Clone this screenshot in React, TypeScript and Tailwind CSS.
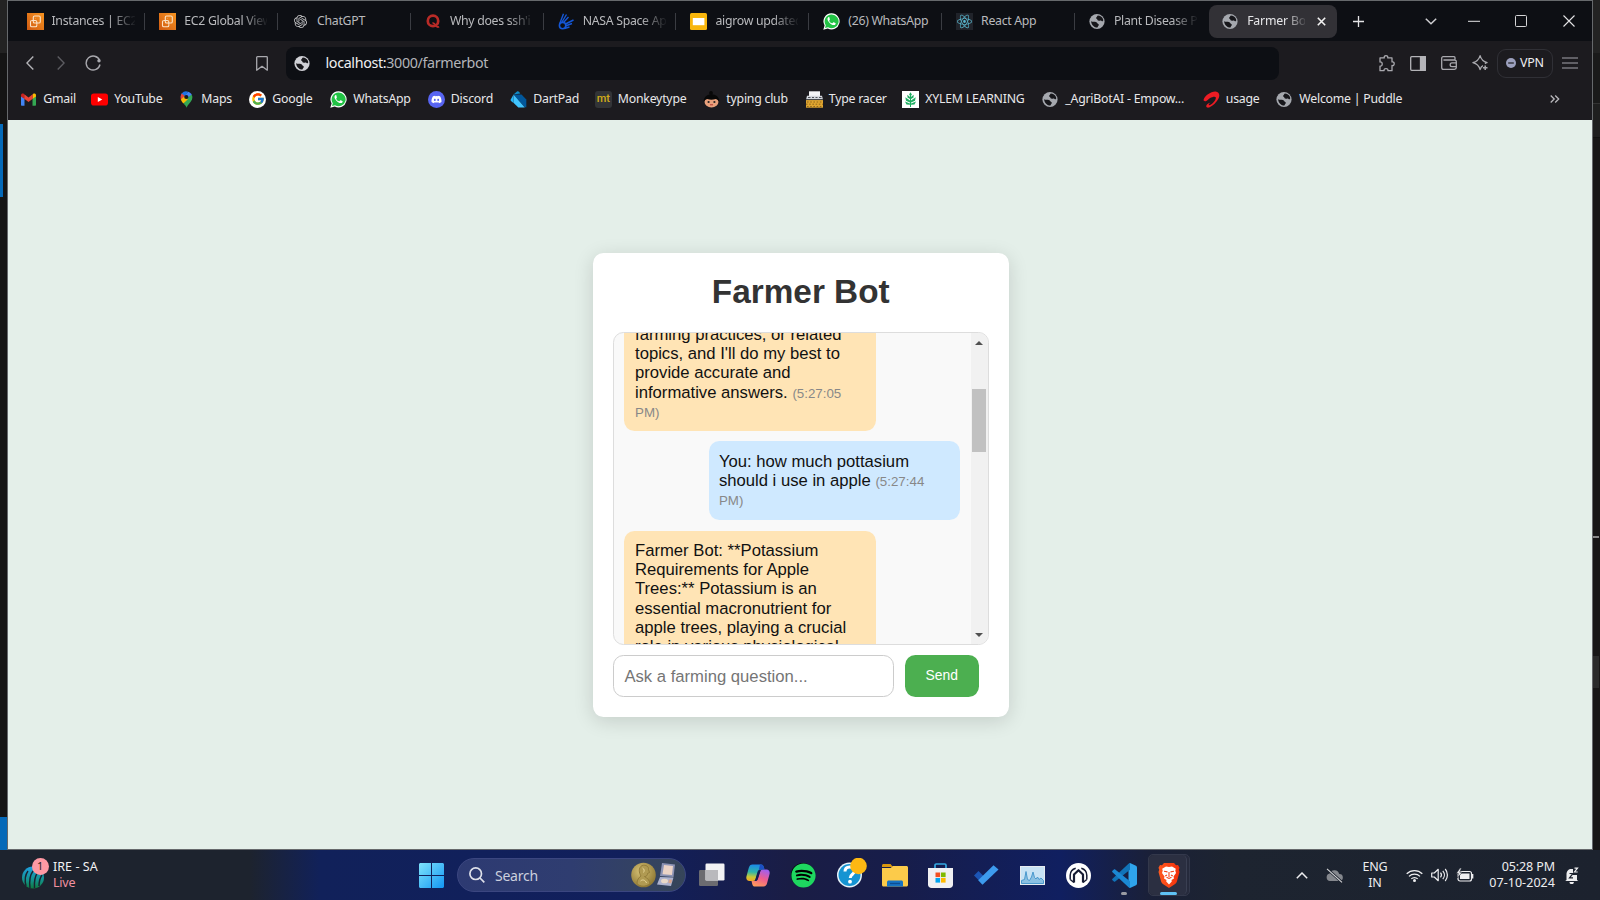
import type { ReactNode } from "react";
import { FaDiscord, FaSpotify } from "react-icons/fa";
import { FcGoogle } from "react-icons/fc";
import { SiOpenai, SiReact } from "react-icons/si";

/* ---------- Favicons ---------- */

const Globe = ({ bright = false }: { bright?: boolean }) => (
  <svg viewBox="0 0 17 17" className={"size-[17px] shrink-0 " + (bright ? "text-[#d0d1d6]" : "text-[#a5a8ae]")}>
    <circle cx="8" cy="8.500" r="7.600" fill="currentColor" />
    <path d="M8.800 2.500c2.400.1 4.300 1.300 5.200 3.500.3 1 .4 1.900-.4 2.300-.7.300-1-.6-1.700-.8-1-.3-1.800.5-2.800.1-.9-.4-.5-1.400-1.400-1.800-.8-.5-.9-1.100-.2-1.600.8-.5.5-1.200 1.300-1.700Z" fill="#17171b" />
    <path d="M2.100 8.300c1.500.8 3.300.3 4.900.7 1.300.400 1.100 1.500 2.200 1.900.9.400.9 1.300.2 1.800-.7.500-.5 1.300-1.200 1.900-1.300-.1-2.700-.6-3.800-1.600C2.900 11.800 2.200 10.200 2.100 8.300Z" fill="#17171b" />
  </svg>
);

const Ec2 = () => (
  <svg viewBox="0 0 17 17" className="size-[17px] shrink-0">
    <defs>
      <linearGradient id="ec2" x1="0" y1="1" x2="1" y2="0">
        <stop offset="0" stopColor="#cf5a12" />
        <stop offset="1" stopColor="#f79420" />
      </linearGradient>
    </defs>
    <rect width="17" height="17" fill="url(#ec2)" />
    <g fill="none" stroke="#fbe3c8" strokeWidth="1.1">
      <rect x="6.300" y="3" width="7" height="7" rx="1.300" />
      <path d="M4.800 7.500c-.8 0-1.300.500-1.300 1.300v3.700c0 .8.500 1.300 1.300 1.300h3.700c.8 0 1.300-.5 1.300-1.300v-1" />
      <path d="M8.500 5.800v-.3M4.800 7.500h3.500c.8 0 1.500.700 1.500 1.500v2.500" />
    </g>
  </svg>
);

const WhatsApp = () => (
  <svg viewBox="0 0 17 17" className="size-[17px] shrink-0">
    <path d="M8.600.3a8 8 0 0 0-7 12.1L.3 16.8l4.500-1.200A8.100 8.100 0 1 0 8.600.3Z" fill="#fff" />
    <path d="M8.600 1.500a6.900 6.900 0 0 0-5.800 10.700L2 15l3-.8A6.900 6.900 0 1 0 8.600 1.500Z" fill="#22c345" />
    <path
      d="M6.400 4.500c-.3-.5-.7-.5-1.100-.2-1 .9-1 2.200-.3 3.500 1 1.900 2.500 3.300 4.600 4.100 1.300.5 2.500.1 3-1 .2-.6.100-.8-.3-1l-1.500-.7c-.3-.1-.5 0-.7.2l-.6.8c-.2.200-.4.200-.6.100-1.200-.5-2.100-1.300-2.700-2.400-.1-.2 0-.4.100-.5l.5-.6c.1-.2.1-.4 0-.6Z"
      fill="#fff"
    />
  </svg>
);

const Quora = () => (
  <svg viewBox="0 0 17 17" className="size-[17px] shrink-0">
    <circle cx="8" cy="7.900" r="5.200" fill="none" stroke="#b92b27" strokeWidth="2.700" />
    <path d="M7.500 10.200c2-.6 2.700 1.200 3.600 2.700.7 1.200 2 1.400 2.900.6" fill="none" stroke="#b92b27" strokeWidth="1.800" />
  </svg>
);

const Nasa = () => (
  <svg viewBox="0 0 17 17" className="size-[17px] shrink-0" fill="none" stroke="#1557d6">
    <circle cx="4.600" cy="12.600" r="3.200" strokeWidth="1.600" />
    <path d="M1.600 11 5.500.8M4 9 8.500 1.500M5.500 9.500l5-5.500M7.500 11l8-4M7.500 13l6.500-2.500M6.500 15.500l5-1.500" strokeWidth="1.400" />
  </svg>
);

const Slides = () => (
  <svg viewBox="0 0 17 17" className="size-[17px] shrink-0">
    <rect width="17" height="17" rx="1.500" fill="#f8b60c" />
    <rect x="2.800" y="5" width="11.600" height="7.200" fill="#fff" />
  </svg>
);

const Gmail = () => (
  <svg viewBox="0 0 17 17" className="size-[17px] shrink-0">
    <path d="M1 5v8.700c0 .6.400 1 1 1h2.500V7.500Z" fill="#4285f4" />
    <path d="M16 5v8.700c0 .6-.4 1-1 1h-2.500V7.500Z" fill="#34a853" />
    <path d="M12.500 4v4L16 5.400V4.200c0-1.600-1.700-2.200-2.800-1.400Z" fill="#fbbc04" />
    <path d="M4.500 4v4L1 5.400V4.200c0-1.600 1.700-2.200 2.800-1.400Z" fill="#c5221f" />
    <path d="M4.300 3.200 8.500 6.400l4.200-3.200v4.600L8.500 11 4.300 7.800Z" fill="#ea4335" />
  </svg>
);

const YouTube = () => (
  <svg viewBox="0 0 17 17" className="size-[17px] shrink-0">
    <rect x="0" y="2.500" width="17" height="12" rx="2.800" fill="#f00" />
    <path d="M6.800 5.900v5.200l4.500-2.600Z" fill="#fff" />
  </svg>
);

const Maps = () => (
  <svg viewBox="0 0 17 17" className="size-[17px] shrink-0">
    <path d="M3.700 2.600A5.700 5.700 0 0 1 10.200.7L4.600 8.200 2.800 6.600c-.1-1.500.2-2.900.9-4Z" fill="#1a73e8" />
    <path d="M3.700 2.600 6.700 5 2.900 9c-.6-2-.4-4.600.8-6.400Z" fill="#ea4335" />
    <path d="M10.200.7c1.600.5 2.900 1.700 3.600 3.100L9.900 8.200 6.800 4.700Z" fill="#4285f4" />
    <path d="M13.800 3.800c1 2 .7 4.200-.6 6.100l-4.700 4L4 9.900Z" fill="#34a853" />
    <path d="M2.900 8.500 6.700 5l3.200 3.300-4.600 4.200c-1-1.300-2.100-2.600-2.400-4Z" fill="#fbbc04" />
    <path d="m5.300 12.500 7.900-2.600C11.500 12.300 9.700 13.700 8.600 16.700c-.5-1.700-1.700-2.900-3.300-4.200Z" fill="#34a853" />
    <circle cx="8.300" cy="6" r="2.100" fill="#1c1b1f" />
  </svg>
);

const Google = () => (
  <span className="flex size-[17px] shrink-0 items-center justify-center rounded-full bg-white">
    <FcGoogle className="size-[14px]" />
  </span>
);

const Discord = () => (
  <span className="flex size-[17px] shrink-0 items-center justify-center rounded-full bg-[#5865f2]">
    <FaDiscord className="size-[11px] text-white" />
  </span>
);

const Dart = () => (
  <svg viewBox="0 0 17 17" className="size-[17px] shrink-0">
    <path d="M3.500 3.500 7 .5c.6-.5 1.500-.3 2 .2l1.300 1.800Z" fill="#0f8cc9" />
    <path d="M3.500 3.500h8l4.800 5v7.800h-1.500Z" fill="#01579b" />
    <path d="M3.500 3.500v8.200l4.800 4.800h6.500Z" fill="#40c4ff" />
    <path d="M3.500 3.500.7 8.500c-.3.600-.1 1.100.3 1.600l2.500 2Z" fill="#29b6f6" />
  </svg>
);

const Monkeytype = () => (
  <span className="flex size-[17px] shrink-0 items-center justify-center rounded-[3px] bg-[#323437] pb-px font-[Roboto,sans-serif] text-[11px] leading-none font-medium text-[#d3ac18]">
    mt
  </span>
);

const TypingClub = () => (
  <svg viewBox="0 0 17 17" className="size-[17px] shrink-0">
    <circle cx="8" cy="1.900" r="1.900" fill="#080808" />
    <ellipse cx="8.500" cy="10.800" rx="7" ry="5.600" fill="#e9a17c" />
    <path d="M.8 11C.4 6 4 3.200 8.500 3.200S16.600 6 16.200 11c-1-1.500-2-2.600-3.300-3-3 .9-6 .9-8.800 0C2.800 8.400 1.600 9.500.8 11Z" fill="#080808" />
    <circle cx="5.600" cy="11" r="1.100" fill="#222" />
    <circle cx="11.400" cy="11" r="1.100" fill="#222" />
    <path d="M7 13.800h3" stroke="#b1372f" strokeWidth="1" />
  </svg>
);

const TypeRacer = () => (
  <svg viewBox="0 0 17 17" className="size-[17px] shrink-0">
    <path d="M3 .3h11v5.500H3Z" fill="#f4f4f6" />
    <path d="M1 4.800h15l1 4H0Z" fill="#d5d8de" />
    <path d="M2 6.500h2.500M6 6.500h2M9.500 6.500h2M13 6.500h2.500" stroke="#50535a" strokeWidth="1" />
    <rect y="8.500" width="17" height="8.200" fill="#e0a52f" />
    <path d="M1 11h15M0 13.200h17M1 15.500h15" stroke="#84601c" strokeWidth=".9" strokeDasharray="1.600 1.600" />
    <path d="M0 8.600h17" stroke="#3b4149" strokeWidth="1" />
  </svg>
);

const Xylem = () => (
  <svg viewBox="0 0 17 17" className="size-[17px] shrink-0">
    <rect width="17" height="17" fill="#fff" />
    <path d="m8.500 1.200 1.400 2.300-1.400 2-1.400-2ZM8 6 5.300 3.800 5.500 6.500 8 8ZM9 6l2.700-2.200-.2 2.700L9 8ZM8 9.500 3.300 6.300l.7 3.500 4 1.700ZM9 9.500l4.700-3.200-.7 3.500-4 1.700ZM8 12.500l-5-2 1.500 3 3.500.3ZM9 12.500l5-2-1.500 3-3.500.3Z" fill="#1fae62" />
    <path d="M8.500 4v12" stroke="#1fae62" strokeWidth="1" />
  </svg>
);

const Airtel = () => (
  <svg viewBox="0 0 17 17" className="size-[17px] shrink-0">
    <path
      d="M.6 8.800C1.200 5 8 .2 12.500.4c3.600.3 4.800 3.500 3 7.200-1.700 3.600-6 7.800-9.300 8.900-1.800.5-3.300-.2-2.900-1.700.5-1.800 2.600-3 4-3.100-.9.700-1.700 1.500-1.500 2.200.3.800 2 0 3.300-1.100 2.500-2.200 4.300-5 3.600-6.500-.7-1.200-3.700-.2-5.600.8C5 8.300 4.300 9.900 2.600 10.200 1.300 10.400.400 9.900.600 8.800Z"
      fill="#ed1c24"
    />
  </svg>
);

/* ---------- Tab strip ---------- */

type TabInfo = { icon: ReactNode; label: string; fade?: boolean };

const tabs: TabInfo[] = [
  { icon: <Ec2 />, label: "Instances | EC2", fade: true },
  { icon: <Ec2 />, label: "EC2 Global View", fade: true },
  { icon: <SiOpenai className="mx-[2px] size-[13px] shrink-0 text-[#c4c4c6]" />, label: "ChatGPT" },
  { icon: <Quora />, label: "Why does ssh'i", fade: true },
  { icon: <Nasa />, label: "NASA Space Ap", fade: true },
  { icon: <Slides />, label: "aigrow updated", fade: true },
  { icon: <WhatsApp />, label: "(26) WhatsApp" },
  {
    icon: (
      <span className="flex size-[17px] shrink-0 items-center justify-center bg-[#20232a]">
        <SiReact className="size-[15px] text-[#58b5cc]" />
      </span>
    ),
    label: "React App",
  },
  { icon: <Globe />, label: "Plant Disease P", fade: true },
];

function Tab({ icon, label, fade }: TabInfo) {
  return (
    <div className="flex h-[17px] w-[132.800px] shrink-0 items-center border-r border-[#3a3c42] pl-[14px] last-of-type:border-transparent">
      {icon}
      <span
        className={
          "ml-2 w-[83px] overflow-hidden text-[12.300px] tracking-[-0.300px] whitespace-nowrap text-[#b9babd] " +
          (fade ? "[mask-image:linear-gradient(to_right,#000_70%,transparent_102%)]" : "")
        }
      >
        {label}
      </span>
    </div>
  );
}

function TabStrip() {
  return (
    <div className="flex h-[40px] shrink-0 items-center bg-[#0d0f14] pl-[4.500px]">
      <div className="flex shrink-0">
        {tabs.map((t) => (
          <Tab key={t.label} {...t} />
        ))}
      </div>
      <div className="ml-[1.500px] flex h-[33px] w-[128px] shrink-0 items-center rounded-[8px] bg-[#323136] pl-[13px]">
        <Globe />
        <span className="ml-2 w-[58px] overflow-hidden text-[12.300px] tracking-[-0.180px] whitespace-nowrap text-[#e6e6e8] [mask-image:linear-gradient(to_right,#000_65%,transparent_105%)]">
          Farmer Bo
        </span>
        <svg viewBox="0 0 9 9" className="ml-[12px] size-[9px]" stroke="#f2f2f2" strokeWidth="1.600">
          <path d="M.8.8l7.400 7.400M8.200.8.8 8.200" />
        </svg>
      </div>
      <svg viewBox="0 0 11 11" className="ml-[16px] size-[11px] shrink-0" stroke="#e4e4e6" strokeWidth="1.300">
        <path d="M5.500 0v11M0 5.500h11" />
      </svg>
      <svg viewBox="0 0 12 7" className="ml-[61px] h-[7px] w-[12px] shrink-0" fill="none" stroke="#cfcfd2" strokeWidth="1.500">
        <path d="m.8.800 5.200 5 5.200-5" />
      </svg>
      <svg viewBox="0 0 12 2" className="ml-[30.500px] h-[2px] w-[12px] shrink-0">
        <path d="M0 1.300h12" stroke="#e4e4e6" strokeWidth="1" />
      </svg>
      <svg viewBox="0 0 12 12" className="ml-[35px] size-[12px] shrink-0" fill="none" stroke="#d4d4d6" strokeWidth="1">
        <rect x=".5" y=".5" width="11" height="11" rx="1" />
      </svg>
      <svg viewBox="0 0 12 12" className="ml-[36px] size-[12px] shrink-0" stroke="#e4e4e6" strokeWidth="1.100">
        <path d="M.5.500l11 11M11.500.500l-11 11" />
      </svg>
    </div>
  );
}

/* ---------- Toolbar ---------- */

function AddressRow() {
  return (
    <div className="flex h-[44px] shrink-0 items-center pl-[18px] [&_svg]:shrink-0">
      <svg viewBox="0 0 8 14" className="h-[14px] w-[8px]" fill="none" stroke="#b4b4b8" strokeWidth="1.400">
        <path d="M7.300.600.900 7l6.400 6.400" />
      </svg>
      <svg viewBox="0 0 8 14" className="ml-[23px] h-[14px] w-[8px]" fill="none" stroke="#5d5d62" strokeWidth="1.400">
        <path d="M.700.600 7.100 7 .700 13.400" />
      </svg>
      <svg viewBox="0 0 17 16" className="ml-[20px] h-[16px] w-[17px]" fill="none" stroke="#a9a9ae" strokeWidth="1.400">
        <path d="M14.600 5.300A7 7 0 1 0 15 9.500" />
        <circle cx="14" cy="5.800" r="1.700" fill="#a9a9ae" stroke="none" />
      </svg>
      <svg viewBox="0 0 12 15" className="ml-[154px] h-[15px] w-[12px]" fill="none" stroke="#a9a9ae" strokeWidth="1.300">
        <path d="M.700 1.500c0-.5.300-.8.800-.8h9c.5 0 .8.300.8.800v12.700L6 10.300.700 14.200Z" strokeLinejoin="round" />
      </svg>
      <div className="ml-[18px] flex h-[33px] w-[993px] shrink-0 items-center rounded-[8px] bg-[#0d0f14] pl-[8px]">
        <Globe bright />
        <span className="ml-[14.500px] text-[14.300px] tracking-[-0.350px] text-[#b3b4b9]">
          <span className="text-[#f0f0f2]">localhost:</span>3000/farmerbot
        </span>
      </div>
      <svg viewBox="0 0 17 17" className="ml-[99px] size-[17px]" fill="none" stroke="#a9a9ae" strokeWidth="1.300" strokeLinejoin="round">
        <path d="M2 2.900h4.300c-.4-1.500.4-2.200 1.700-2.200s2.100.7 1.700 2.200h4.300v4c1.500-.4 2.200.6 2.200 1.800s-.7 2.200-2.200 1.800v5.200H9.900c.3-1.300-.4-2.100-1.900-2.100s-2.200.8-1.900 2.100H2v-4.600c1.600.2 2.200-.9 2.200-2.200S3.600 6.700 2 7Z" />
      </svg>
      <svg viewBox="0 0 16 15" className="ml-[15px] h-[15px] w-[16px]" fill="none" stroke="#b4b4b8" strokeWidth="1.300">
        <rect x=".7" y=".7" width="14.600" height="13.600" rx="1" />
        <path d="M10.500.700h4.800v13.600h-4.800Z" fill="#b4b4b8" />
      </svg>
      <svg viewBox="0 0 16 14" className="ml-[15px] h-[14px] w-[16px]" fill="none" stroke="#a9a9ae" strokeWidth="1.300">
        <path d="M14 4V1.700c0-.6-.4-1-1-1H2.200C1.300.700.700 1.300.700 2.100v9.300c0 1.100.7 1.900 1.900 1.900h10.800c1 0 1.900-.7 1.900-1.700V5.700c0-1-.7-1.700-1.700-1.700H2.400" />
        <path d="M15.300 6.900H11a1.800 1.800 0 0 0 0 3.700h4.300" />
      </svg>
      <svg viewBox="0 0 16 16" className="ml-[15px] size-[16px]" fill="none" stroke="#a9a9ae" strokeWidth="1.300" strokeLinejoin="round">
        <path d="M11 10.600c-1.600.6-2.200 1.500-2.900 4.100C7.100 10.800 5.500 8.900.9 7.700c4.100-1 6-2.600 7.200-7 1.100 4.100 2.900 5.900 7 7-.9.200-1.600.5-2.200.9" />
        <path d="M13.200 10.500v4.600M10.900 12.800h4.600" strokeWidth="1.500" />
      </svg>
      <div className="ml-[9px] flex h-[29px] w-[56px] shrink-0 items-center rounded-[9px] border border-[#303036] pl-[8px]">
        <svg viewBox="0 0 10 10" className="size-[10px]">
          <circle cx="5" cy="5" r="5" fill="#9ca0bd" />
          <path d="M2.200 5h5.600" stroke="#1c1b1f" strokeWidth="1.200" />
        </svg>
        <span className="ml-[4px] text-[12.500px] tracking-[-0.250px] text-[#ededf0]">VPN</span>
      </div>
      <svg viewBox="0 0 16 12" className="ml-[9px] h-[12px] w-[16px]" stroke="#77777d" strokeWidth="1.300">
        <path d="M0 1h16M0 6h16M0 11h16" />
      </svg>
    </div>
  );
}

const bookmarks: { icon: ReactNode; label: string; width: string }[] = [
  { icon: <Gmail />, label: "Gmail", width: "w-[71px]" },
  { icon: <YouTube />, label: "YouTube", width: "w-[87px]" },
  { icon: <Maps />, label: "Maps", width: "w-[71px]" },
  { icon: <Google />, label: "Google", width: "w-[81px]" },
  { icon: <WhatsApp />, label: "WhatsApp", width: "w-[97.500px]" },
  { icon: <Discord />, label: "Discord", width: "w-[82.500px]" },
  { icon: <Dart />, label: "DartPad", width: "w-[84.500px]" },
  { icon: <Monkeytype />, label: "Monkeytype", width: "w-[108.500px]" },
  { icon: <TypingClub />, label: "typing club", width: "w-[102.500px]" },
  { icon: <TypeRacer />, label: "Type racer", width: "w-[96.500px]" },
  { icon: <Xylem />, label: "XYLEM LEARNING", width: "w-[140px]" },
  { icon: <Globe />, label: "_AgriBotAI - Empow...", width: "w-[160.500px]" },
  { icon: <Airtel />, label: "usage", width: "w-[73.500px]" },
  { icon: <Globe />, label: "Welcome | Puddle", width: "w-[140px]" },
];

function BookmarkBar() {
  return (
    <div className="flex h-[35px] shrink-0 items-start pt-[4px] pl-[12.300px]">
      {bookmarks.map((b) => (
        <div key={b.label} className={"flex h-[20px] shrink-0 items-center gap-[6px] " + b.width}>
          {b.icon}
          <span className="text-[12.300px] tracking-[-0.230px] whitespace-nowrap text-[#e8e8ea]">{b.label}</span>
        </div>
      ))}
      <svg viewBox="0 0 10 8" className="mt-[6px] ml-[134px] h-[8px] w-[10px] shrink-0" fill="none" stroke="#b9b9bd" strokeWidth="1.300">
        <path d="m.700.500 3.500 3.500L.700 7.500M5.200.500 8.700 4 5.200 7.500" />
      </svg>
    </div>
  );
}

/* ---------- Chat page ---------- */

const Time = ({ children }: { children: ReactNode }) => (
  <span className="text-[13.330px] leading-none text-[#888]">{children}</span>
);

function BotMessage({ children }: { children: ReactNode }) {
  return (
    <div className="w-[252px] shrink-0 self-start rounded-[10.400px] bg-[#ffe4b5] py-[10.400px] pl-[11px]">
      {children}
    </div>
  );
}

function UserMessage({ children }: { children: ReactNode }) {
  return (
    <div className="mt-[10px] mb-[11px] w-[251px] shrink-0 self-end rounded-[10.400px] bg-[#cfe9ff] py-[10.400px] pl-[10.400px]">
      {children}
    </div>
  );
}

function ChatCard() {
  return (
    <div className="ml-[1.500px] flex h-[464px] w-[416.500px] flex-col rounded-[10.400px] bg-white px-[20.500px] shadow-[0_4px_20px_rgba(0,0,0,0.14)]">
      <h1 className="mt-[20px] mb-[20.500px] h-[38px] text-center text-[33.330px] leading-[38px] font-bold text-[#333]">
        Farmer Bot
      </h1>
      <div className="flex h-[313px] shrink-0 overflow-hidden rounded-[10.400px] border border-[#ddd] bg-[#f9f9f9]">
        <div className="flex h-full flex-1 flex-col overflow-hidden pr-[11px] pl-[10px] text-[16.670px] leading-[19.200px] text-[#111]">
          <div className="-mt-[18px] flex shrink-0 flex-col">
            <BotMessage>
              farming practices, or related
              <br />
              topics, and I'll do my best to
              <br />
              provide accurate and
              <br />
              informative answers. <Time>(5:27:05</Time>
              <br />
              <Time>PM)</Time>
            </BotMessage>
            <UserMessage>
              You: how much pottasium
              <br />
              should i use in apple <Time>(5:27:44</Time>
              <br />
              <Time>PM)</Time>
            </UserMessage>
            <BotMessage>
              Farmer Bot: **Potassium
              <br />
              Requirements for Apple
              <br />
              Trees:** Potassium is an
              <br />
              essential macronutrient for
              <br />
              apple trees, playing a crucial
              <br />
              role in various physiological
            </BotMessage>
          </div>
        </div>
        <div className="flex w-[17px] shrink-0 flex-col items-center bg-[#f1f1f1]">
          <svg viewBox="0 0 8 4" className="mt-[8px] h-[4px] w-[8px]">
            <path d="M0 4 4 0l4 4Z" fill="#505050" />
          </svg>
          <div className="mt-[44px] h-[63px] w-[14.500px] bg-[#c1c1c1]" />
          <svg viewBox="0 0 8 4" className="mt-auto mb-[7px] h-[4px] w-[8px]">
            <path d="M0 0l4 4 4-4Z" fill="#505050" />
          </svg>
        </div>
      </div>
      <div className="mt-[10.500px] flex">
        <div className="flex h-[42px] w-[281px] items-center rounded-[10.400px] border border-[#ccc] pl-[10.400px] text-[16.670px] text-[#757575]">
          Ask a farming question...
        </div>
        <button className="ml-[11px] h-[42px] w-[73.500px] rounded-[10.400px] bg-[#4caf50] pb-px text-[13.890px] text-white">
          Send
        </button>
      </div>
    </div>
  );
}

/* ---------- Taskbar ---------- */

function StartIcon() {
  return (
    <svg viewBox="0 0 25 25" className="size-[25px]">
      <defs>
        <linearGradient id="win" x1="0" y1="0" x2="1" y2="1">
          <stop offset="0" stopColor="#7fe3fb" />
          <stop offset="1" stopColor="#1296f3" />
        </linearGradient>
      </defs>
      <path d="M1.500 0H12v12H0V1.500C0 .700.700 0 1.500 0ZM13 0h10.500c.8 0 1.500.700 1.500 1.500V12H13ZM0 13h12v12H1.500C.700 25 0 24.300 0 23.500ZM13 13h12v10.500c0 .8-.7 1.500-1.500 1.500H13Z" fill="url(#win)" />
    </svg>
  );
}

function NobelArt() {
  return (
    <svg viewBox="0 0 46 26" className="h-[26px] w-[46px]">
      <defs>
        <radialGradient id="gold" cx="0.4" cy="0.35" r="0.7">
          <stop offset="0" stopColor="#d9c477" />
          <stop offset="1" stopColor="#8b7430" />
        </radialGradient>
      </defs>
      <circle cx="12.500" cy="13" r="12.300" fill="url(#gold)" />
      <path d="M11 3.500c4-1 7 1 6.500 4l1 3-2 1c0 2-1 3-3 3 3 1.500 5 4 5.500 7-4 3.500-10 3.500-13 0 0-4 2-6 4-7.500C8 11 7 6 11 3.500Z" fill="#b09a52" stroke="#8a7434" strokeWidth=".8" />
      <path d="M11.500 6c2 1 2 3 1 4.500M9.500 19c2-2 5-1 6 2" fill="none" stroke="#e8d698" strokeWidth="1" />
      <path d="m31 1 13 1.500-1.500 12.500L29 14Z" fill="#8c93b4" />
      <path d="m33 3 9 1-1 9-9.500-.800Z" fill="#ecd4c6" />
      <path d="m29 15 13.500.500L40 24l-14-1.500Z" fill="#aeb3cf" />
      <ellipse cx="33.500" cy="19" rx="3.500" ry="2.300" fill="#e9d9c8" />
      <path d="m38 17.500 3 .300-.700 3.500-3-.300Z" fill="#d8a58c" />
    </svg>
  );
}

function TaskView() {
  return (
    <svg viewBox="0 0 26 24" className="h-[24px] w-[26px]">
      <rect x="0" y="7" width="19" height="16" rx="1.200" fill="#6b6b70" />
      <rect x="6.500" y=".5" width="19" height="17" rx="1.200" fill="#f2f2f4" />
      <rect x="6.500" y="7" width="12.500" height="10.500" fill="#b9b9bd" />
    </svg>
  );
}

function Copilot() {
  return (
    <svg viewBox="0 0 24 23" className="h-[23px] w-[24px]">
      <defs>
        <linearGradient id="cpA" x1="0.3" y1="0" x2="0.2" y2="1">
          <stop offset="0" stopColor="#1b8bea" />
          <stop offset="0.45" stopColor="#2fb6a8" />
          <stop offset="0.75" stopColor="#c9c837" />
          <stop offset="1" stopColor="#f5a623" />
        </linearGradient>
        <linearGradient id="cpB" x1="0.7" y1="0" x2="0.3" y2="1">
          <stop offset="0" stopColor="#a05ff0" />
          <stop offset="0.5" stopColor="#ee5d8f" />
          <stop offset="1" stopColor="#ff9a5a" />
        </linearGradient>
      </defs>
      <path d="M6.500.500h8.500c1.500 0 2.300.9 2.700 2.300l.8 2.700h-3.500c-1.600 0-2.500.8-3 2.300l-2.200 7c-.5 1.400-1.300 2.200-2.800 2.200H3.500C.8 17-.2 14.900.5 12.300l2.300-8.500C3.400 1.700 4.500.5 6.500.5Z" fill="url(#cpA)" />
      <path d="M17.500 22.500H9c-1.500 0-2.300-.9-2.700-2.300L5.500 17H9c1.600 0 2.500-.8 3-2.300l2.200-7c.5-1.400 1.300-2.200 2.800-2.200h3.500c2.700 0 3.700 2.100 3 4.700l-2.300 8.500c-.6 2.600-1.700 3.800-3.700 3.800Z" fill="url(#cpB)" />
      <path d="M12 6.500 9 16.500h2l3.500-10Z" fill="#141c55" />
      <path d="M14 .5h1c1.500 0 2.300.9 2.700 2.300l.8 2.700h-3.500c-1 0-1.800.4-2.300 1Z" fill="#1c4fc4" />
    </svg>
  );
}

function HelpIcon() {
  return (
    <svg viewBox="0 0 32 30" className="h-[30px] w-[32px]">
      <circle cx="13.500" cy="17" r="12.500" fill="#e9f4fa" />
      <circle cx="13.500" cy="17" r="11" fill="#1594d2" />
      <path d="M9 13.500c0-3 2-4.500 4.700-4.500 2.800 0 4.800 1.500 4.800 4 0 3.300-4.300 3.300-4.300 7" fill="none" stroke="#fff" strokeWidth="3" />
      <circle cx="14" cy="23.700" r="1.900" fill="#fff" />
      <circle cx="22.500" cy="8" r="8.300" fill="#fdb813" />
    </svg>
  );
}

function Explorer() {
  return (
    <svg viewBox="0 0 26 23" className="h-[23px] w-[26px]">
      <path d="M0 1.500C0 .700.500 0 1.500 0h7l2.500 3H0Z" fill="#d9970e" />
      <path d="M0 4h8.500L11 2h13.500c.8 0 1.500.700 1.500 1.500V21c0 .8-.7 1.500-1.500 1.500h-23C.7 22.500 0 21.800 0 21Z" fill="#fccb4a" />
      <path d="M5 22.500v-4.300c0-1 .8-1.700 1.700-1.700h12.600c1 0 1.700.700 1.700 1.700v4.300Z" fill="#1673c4" />
      <path d="M8 19.500h10" stroke="#0d4d92" strokeWidth="1.300" />
    </svg>
  );
}

function Store() {
  return (
    <svg viewBox="0 0 25 25" className="size-[25px]">
      <path d="M7 6V2.200C7 1.500 7.500 1 8.200 1h8.600c.7 0 1.200.500 1.200 1.200V6" fill="none" stroke="#35a8e0" strokeWidth="1.700" />
      <path d="M0 5h25v16.500c0 2-1.500 3.500-3.500 3.500h-18C1.500 25 0 23.500 0 21.500Z" fill="#f0f0f2" />
      <rect x="7.500" y="9.500" width="4.600" height="4.600" fill="#f25022" />
      <rect x="13" y="9.500" width="4.600" height="4.600" fill="#7fba00" />
      <rect x="7.500" y="15" width="4.600" height="4.600" fill="#00a4ef" />
      <rect x="13" y="15" width="4.600" height="4.600" fill="#ffb900" />
    </svg>
  );
}

function Todo() {
  return (
    <svg viewBox="0 0 25 20" className="h-[20px] w-[25px]">
      <path d="M0 10.500 4.500 6l6.500 6.500L8.500 19Z" fill="#1c55b5" />
      <path d="M8.500 19.800 4.200 15.300 19.500.3 24.500 4.500Z" fill="#3d9bee" />
    </svg>
  );
}

function Monitor() {
  return (
    <svg viewBox="0 0 25 19" className="h-[19px] w-[25px]">
      <rect width="25" height="19" fill="#e6ebf0" />
      <rect x="1" y="1" width="23" height="17" fill="#c7e2f4" />
      <path d="M1.500 17.500v-3l3-1 1.500-8 1.500 8 2 1 2-3.500 1.500-5 1.500 5.500 1.500 1.500 1.500-2 1.500 2.500 2-1.500 2.500 2.500v3Z" fill="#8ac0e2" stroke="#3f92c9" strokeWidth=".9" />
    </svg>
  );
}

function RoundArch() {
  return (
    <svg viewBox="0 0 25 25" className="size-[25px]" fill="none">
      <circle cx="12.500" cy="12.500" r="12.500" fill="#fff" />
      <path d="M4.200 16.500v-4.300a7.500 7.500 0 0 1 5.500-7M20.800 16.500v-4.300a7.500 7.500 0 0 0-5.500-7" stroke="#161b33" strokeWidth="1.500" />
      <path d="M8 19.500v-8l4.500-4.300L17 11.500v8" stroke="#161b33" strokeWidth="2.200" strokeLinejoin="round" />
      <path d="M4.200 16.500 8 19.500M20.800 16.500 17 19.500" stroke="#161b33" strokeWidth="1.500" />
    </svg>
  );
}

function VsCode() {
  return (
    <svg viewBox="0 0 25 25" className="size-[25px]">
      <path d="m18 0 6 2.700c.6.300 1 .9 1 1.500v16.600c0 .6-.4 1.200-1 1.500L18 25l-1.500-1.500v-22Z" fill="#2fa4ec" />
      <path d="M18 0v6.800L3.200 18.500c-.4.300-.9.300-1.300 0L.5 17.200c-.5-.4-.5-1.100 0-1.500L16.500.8Z" fill="#1173b8" />
      <path d="M18 25v-6.800L3.200 6.500c-.4-.3-.9-.3-1.300 0L.5 7.800c-.5.400-.5 1.100 0 1.500l16 14.900Z" fill="#1b88d4" />
    </svg>
  );
}

function Brave() {
  return (
    <svg viewBox="0 0 22 25" className="h-[25px] w-[22px]">
      <defs>
        <linearGradient id="brave" x1="0" y1="0" x2="1" y2="0">
          <stop offset="0" stopColor="#ff5a1f" />
          <stop offset="1" stopColor="#f2300c" />
        </linearGradient>
      </defs>
      <path d="M6 0h10l2 2.300 2-.2 1.500 2.600-.7 2 .7 2.300-2.700 9.700c-.3 1-.9 1.700-1.700 2.300L11 25l-6.100-4c-.8-.6-1.400-1.300-1.700-2.300L.5 9l.7-2.300-.7-2L2 2.100l2 .2Z" fill="url(#brave)" />
      <path d="m11 4 3-.600 3.800 2.300-.5 2 .7 2.300-2.500 3.500.5 2-2.500 1.500.3 1.600L11 21.500l-2.800-2.900.3-1.600L6 15.500l.5-2L4 10l.7-2.300-.5-2L8 3.400Z" fill="#fff" />
      <path d="m6 8.300 3.500.600M16 8.300l-3.500.600M11 9v5M8.500 14.300l2.500 1.200 2.500-1.200M9 12l-1.800 1M13 12l1.800 1" fill="none" stroke="#f4441a" strokeWidth="1.100" />
    </svg>
  );
}

const Slot = ({ children }: { children: ReactNode }) => (
  <div className="flex w-[45.800px] shrink-0 items-center justify-center">{children}</div>
);

function Taskbar() {
  return (
    <div className="flex h-[50px] shrink-0 items-center bg-[linear-gradient(to_right,#1d232e_0px,#1d232e_250px,#11215a_320px,#111f5c_640px,#1a1d45_790px,#171d4a_900px,#101f60_1060px,#1a2038_1150px,#1d2430_1230px,#1c222e_1600px)] [&_svg]:shrink-0">
      <div className="flex w-[418.500px] shrink-0 items-center pl-[22px]">
        <div className="relative h-[30px] w-[28px]">
          <svg viewBox="0 0 22 23" className="mt-[6px] h-[23px] w-[22px]">
            <defs>
              <linearGradient id="icc" x1="0" y1="0" x2="0" y2="1">
                <stop offset="0" stopColor="#1d9fe0" />
                <stop offset="0.6" stopColor="#14938f" />
                <stop offset="1" stopColor="#0f7a3f" />
              </linearGradient>
            </defs>
            <circle cx="11" cy="11.500" r="11" fill="url(#icc)" />
            <path d="M6 5C3 9 2.500 14 4 20M11 5c-3 4-4 9-3 17M16 6c-3 4-4 9-3.500 16M20 9c-2 3-3 7-3 11" fill="none" stroke="#1a2230" strokeWidth="1.400" />
          </svg>
          <span className="absolute -top-[2px] left-[10px] flex size-[16.500px] items-center justify-center rounded-full bg-[#ff99a4] text-[11px] text-[#2a1d20]">
            1
          </span>
        </div>
        <div className="ml-[3px] flex flex-col text-[12.500px] leading-[16.500px] tracking-[0.050px]">
          <span className="text-[#f2f2f4]">IRE - SA</span>
          <span className="tracking-[-0.250px] text-[#f191a0]">Live</span>
        </div>
      </div>
      <StartIcon />
      <div className="ml-[13.500px] flex h-[34px] w-[229px] shrink-0 items-center rounded-full border border-[#3b4680] bg-[linear-gradient(to_right,#2d3a72,#2f3d70,#364559)] pr-[8px] pl-[11px]">
        <svg viewBox="0 0 16 16" className="size-[16px]" fill="none" stroke="#dfe1ea" strokeWidth="1.700">
          <circle cx="6.700" cy="6.700" r="5.800" />
          <path d="m11 11 4.300 4.300" />
        </svg>
        <span className="ml-[10px] text-[14px] tracking-[-0.250px] text-[#ccd0de]">Search</span>
        <div className="ml-auto">
          <NobelArt />
        </div>
      </div>
      <div className="ml-[3px] flex h-full items-center">
        <Slot><TaskView /></Slot>
        <Slot><Copilot /></Slot>
        <Slot>
          <span className="flex size-[24px] items-center justify-center rounded-full bg-black">
            <FaSpotify className="size-[25px] text-[#1ed760]" />
          </span>
        </Slot>
        <Slot>
          <div className="-mt-[5px] ml-[5px]"><HelpIcon /></div>
        </Slot>
        <Slot><Explorer /></Slot>
        <Slot><Store /></Slot>
        <Slot><Todo /></Slot>
        <Slot><Monitor /></Slot>
        <Slot><RoundArch /></Slot>
        <div className="flex h-full w-[45.800px] shrink-0 flex-col items-center">
          <div className="mt-[12.500px]"><VsCode /></div>
          <span className="mt-[4px] h-[3px] w-[6px] rounded-full bg-[#9a9ba3]" />
        </div>
        <div className="ml-[1px] flex h-[42px] w-[42px] shrink-0 rounded-[5px] border border-[#33384b] bg-[#262a3c]">
          <div className="flex h-[40px] w-[38px] flex-col items-center rounded-[5px] border-r border-[#3a3f52] bg-[#2b2f41]">
            <div className="mt-[8px] ml-[3px]"><Brave /></div>
            <span className="mt-[4px] ml-[3px] h-[3px] w-[17px] rounded-full bg-[#5fc2f5]" />
          </div>
        </div>
      </div>
      <div className="ml-auto flex h-full shrink-0 items-center pr-[20.500px] text-[12.500px] tracking-[-0.200px] text-[#eeeef0]">
        <svg viewBox="0 0 12 7" className="h-[7px] w-[12px]" fill="none" stroke="#eeeef0" strokeWidth="1.500">
          <path d="M.8 6.200 6 1l5.200 5.200" />
        </svg>
        <svg viewBox="0 0 17 15" className="ml-[18.500px] h-[15px] w-[17px]">
          <path d="M4 13a3.800 3.800 0 0 1-.3-7.500 5 5 0 0 1 9.500.5A3.500 3.500 0 0 1 13.500 13Z" fill="#84878d" />
          <path d="m1 .800 15 13.500" stroke="#1c222e" strokeWidth="2.600" />
          <path d="m1 .800 15 13.500" stroke="#d7d8da" strokeWidth="1.100" />
        </svg>
        <div className="ml-[19px] flex w-[26px] flex-col items-center leading-[16.500px]">
          <span>ENG</span>
          <span>IN</span>
        </div>
        <svg viewBox="0 0 17 13" className="ml-[18px] h-[13px] w-[17px]" fill="none" stroke="#eeeef0" strokeWidth="1.300">
          <path d="M.7 4.800a11 11 0 0 1 15.600 0M3 7.400a7.800 7.800 0 0 1 11 0M5.300 9.900a4.500 4.500 0 0 1 6.400 0" />
          <circle cx="8.500" cy="11.400" r="1.500" fill="#eeeef0" stroke="none" />
        </svg>
        <svg viewBox="0 0 18 14" className="ml-[8px] h-[14px] w-[18px]" fill="none" stroke="#eeeef0" strokeWidth="1.200" strokeLinejoin="round">
          <path d="M.7 5v4h2.600L7.200 12.700V1.300L3.300 5Z" />
          <path d="M9.500 4.700a3.600 3.600 0 0 1 0 4.600M11.800 2.800a6.400 6.400 0 0 1 0 8.400M14.200 1a9.300 9.300 0 0 1 0 12" />
        </svg>
        <svg viewBox="0 0 18 14" className="ml-[7px] h-[14px] w-[18px]">
          <rect x="2" y="3.500" width="13.500" height="9.500" rx="2" fill="none" stroke="#eeeef0" strokeWidth="1.200" />
          <rect x="4" y="5.500" width="9.500" height="5.500" fill="#eeeef0" />
          <path d="M16.500 6v4.500" stroke="#eeeef0" strokeWidth="1.700" />
          <path d="M4 0 .3 5.500h2L1.500 10 6.200 4.200H3.800L5.500 0Z" fill="#eeeef0" stroke="#1c222e" strokeWidth=".6" />
        </svg>
        <div className="ml-[16px] flex w-[65px] flex-col items-end leading-[16.500px] whitespace-nowrap">
          <span className="tracking-[-0.100px]">05:28 PM</span>
          <span className="tracking-[0.050px]">07-10-2024</span>
        </div>
        <svg viewBox="0 0 16 17" className="ml-[8.500px] h-[17px] w-[16px]">
          <path d="M2.500 13V7.500C2.500 4 4.500 2 7.500 2H9v6h4v5l1.200 1H1.200Z" fill="#eeeef0" />
          <path d="M5.500 15h4.400a2.200 2.200 0 0 1-4.400 0Z" fill="#eeeef0" />
          <path d="M5.500 6.500H9L5.500 10.800H9" fill="none" stroke="#1c222e" strokeWidth="1.200" />
          <path d="M10.500 1.200h3L10.500 5h3.200" fill="none" stroke="#eeeef0" strokeWidth="1.200" />
        </svg>
      </div>
    </div>
  );
}

/* ---------- Desktop ---------- */

export default function App() {
  return (
    <div className="flex h-[900px] w-[1600px] flex-col overflow-hidden bg-[#161616] font-['Noto_Sans','Open_Sans',sans-serif]">
      <div className="flex h-[850px] shrink-0">
        <div className="flex w-[7px] shrink-0 flex-col bg-[#151515]">
          <div className="h-[53px] bg-[#232323]" />
          <div className="mt-[71px] h-[73px] w-[3px] bg-[#0569b8]" />
          <div className="mt-auto h-[33px] bg-[#0569b8]" />
        </div>
        <div className="flex w-[1586px] shrink-0 flex-col border border-[#66696c] bg-[#1c1b1f]">
          <TabStrip />
          <AddressRow />
          <BookmarkBar />
          <div className="flex flex-1 items-start justify-center bg-[#e4efe9] pt-[133px] font-['Liberation_Sans',Arial,sans-serif]">
            <ChatCard />
          </div>
        </div>
        <div className="flex flex-1 flex-col bg-[#181717]">
          <div className="h-[53px] bg-[#232323]" />
          <div className="h-[51px] border-b border-[#333] bg-[#1a1a1a]" />
          <div className="h-[34px] border-b border-[#111] bg-[#1f1f1f]" />
          <div className="mt-[398px] h-[2px] w-[6px] bg-[#8a8a8a]" />
          <div className="mt-[118px] h-[32px] w-[6px] bg-[#2b2b2b]" />
        </div>
      </div>
      <Taskbar />
    </div>
  );
}
